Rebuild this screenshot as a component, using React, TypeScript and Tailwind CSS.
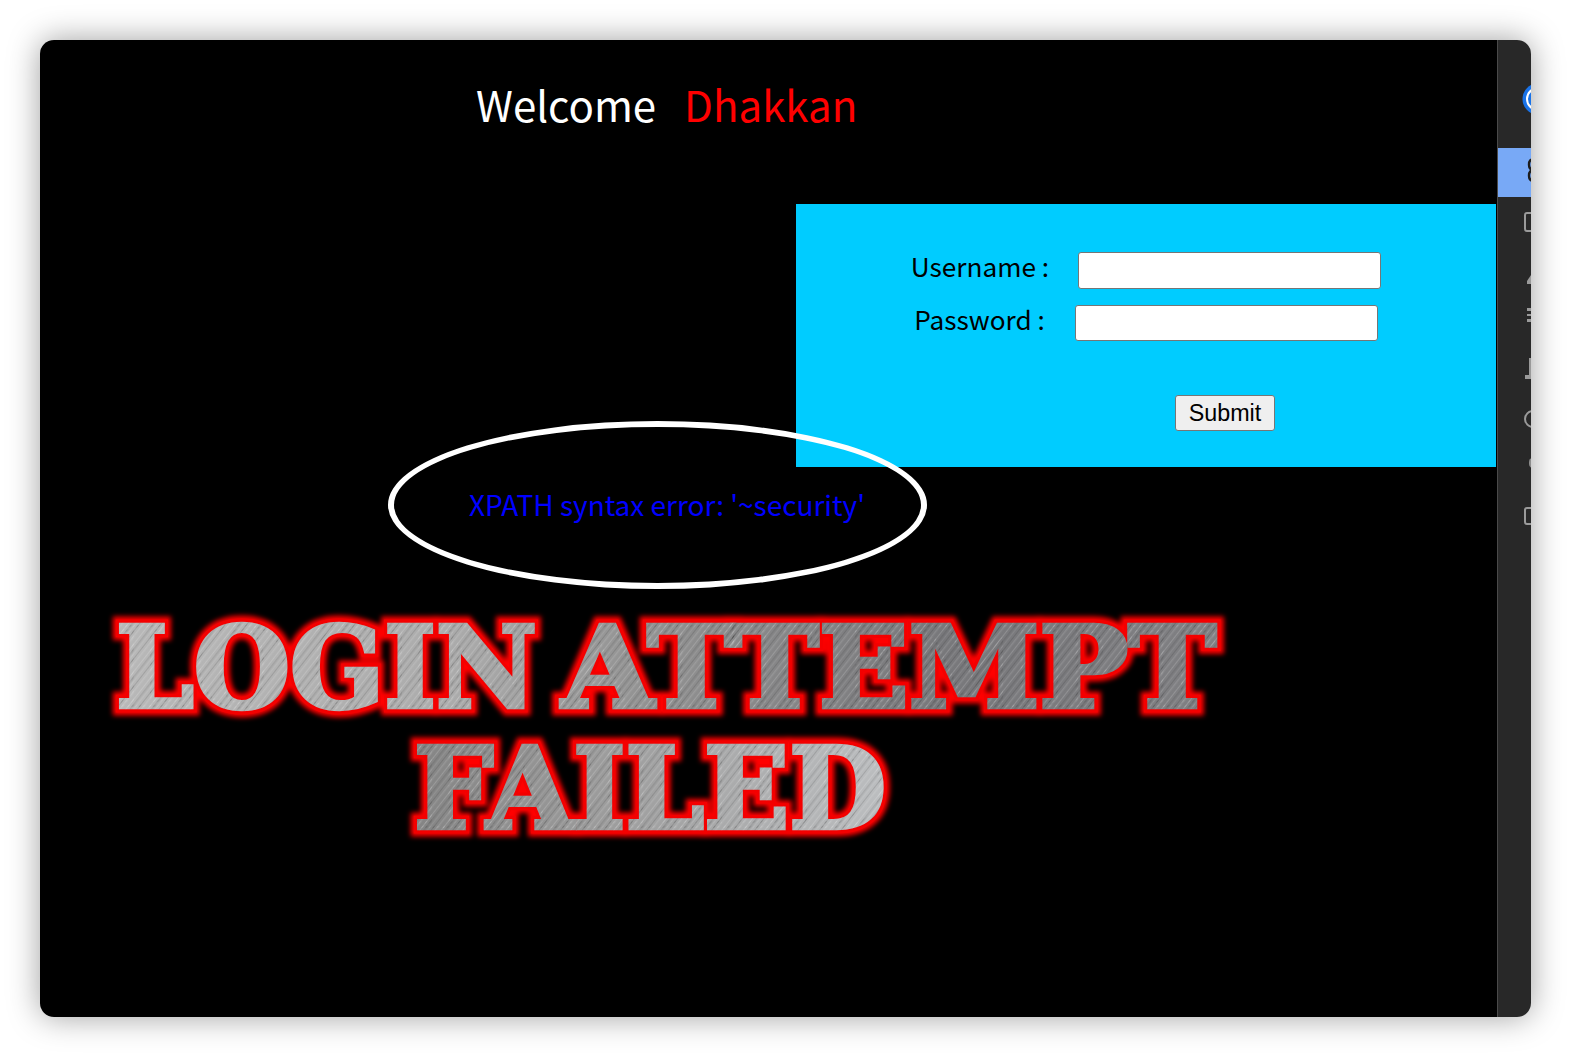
import React from "react";

const cjk = '"Noto Sans CJK SC", "Noto Sans", sans-serif';

function FailedBanner() {
  const words = [
    { text: "LOGIN", x: 16, y: 105, len: 421, grad: "url(#metal1)" },
    { text: "ATTEMPT", x: 462, y: 105, len: 654, grad: "url(#metal1)" },
    { text: "FAILED", x: 314, y: 226, len: 472, grad: "url(#metal2)" },
  ];
  const common = {
    fontFamily: '"DejaVu Serif", serif',
    fontWeight: 700,
    fontSize: 112,
    lengthAdjust: "spacingAndGlyphs" as const,
    strokeLinejoin: "miter" as const,
  };
  return (
    <svg width="1140" height="270" viewBox="0 0 1140 270" className="block">
      <defs>
        <linearGradient id="metal1" x1="15" x2="1117" y1="0" y2="0" gradientUnits="userSpaceOnUse">
          <stop offset="0" stopColor="#b8b8b8" />
          <stop offset="0.3" stopColor="#acacac" />
          <stop offset="0.48" stopColor="#929292" />
          <stop offset="0.75" stopColor="#78787b" />
          <stop offset="1" stopColor="#808083" />
        </linearGradient>
        <linearGradient id="metal2" x1="313" x2="787" y1="0" y2="0" gradientUnits="userSpaceOnUse">
          <stop offset="0" stopColor="#848484" />
          <stop offset="0.4" stopColor="#9c9c9c" />
          <stop offset="1" stopColor="#bcbec0" />
        </linearGradient>
        <pattern id="brush" width="17" height="17" patternUnits="userSpaceOnUse" patternTransform="rotate(-52)">
          <rect y="1" width="17" height="1" fill="#ffffff" opacity="0.16" />
          <rect y="4" width="17" height="1.5" fill="#000000" opacity="0.09" />
          <rect y="7" width="17" height="0.8" fill="#ffffff" opacity="0.1" />
          <rect y="10" width="17" height="1" fill="#000000" opacity="0.12" />
          <rect y="13" width="17" height="1.4" fill="#ffffff" opacity="0.12" />
        </pattern>
        <filter id="glow" x="-5%" y="-20%" width="110%" height="140%">
          <feGaussianBlur stdDeviation="2.6" />
        </filter>
      </defs>
      {words.map((l) => (
        <g key={l.text}>
          <text {...common} x={l.x} y={l.y} textLength={l.len} fill="#ff0000" stroke="#ff0000" strokeWidth="17" filter="url(#glow)">{l.text}</text>
          <text {...common} x={l.x} y={l.y} textLength={l.len} fill="#ff0000" stroke="#f40000" strokeWidth="11">{l.text}</text>
        </g>
      ))}
      {words.map((l) => (
        <g key={l.text + "-face"}>
          <text {...common} x={l.x} y={l.y} textLength={l.len} fill={l.grad} stroke={l.grad} strokeWidth="4.5">{l.text}</text>
          <text {...common} x={l.x} y={l.y} textLength={l.len} fill="url(#brush)" stroke="url(#brush)" strokeWidth="4.5">{l.text}</text>
        </g>
      ))}
    </svg>
  );
}

function Rail() {
  const grey = "#9a9a9a";
  return (
    <aside className="w-[34px] shrink-0 bg-[#282828] overflow-hidden border-l border-[#4a4a4a]">
      <div className="h-[108px] pt-[43px] pl-[24px]">
        <svg width="32" height="32" viewBox="0 0 32 32" className="block">
          <circle cx="16" cy="16" r="15.5" fill="#1a73e8" />
          <circle cx="16" cy="16" r="11" fill="none" stroke="#ffffff" strokeWidth="2" />
          <path d="M9 9q7 5 14 0M9 23q7-5 14 0" fill="none" stroke="#ffffff" strokeWidth="2" />
        </svg>
      </div>
      <div className="h-[49px] bg-[#78a9f6] pl-[28px] pt-[9px]">
        <svg width="12" height="26" viewBox="0 0 12 26" className="block">
          <path d="M8 2q-5 0-5 5.5t5 5.5q-5 0-5 5.5t5 5.5" fill="none" stroke="#1c1c1c" strokeWidth="2.4" />
        </svg>
      </div>
      <div className="h-[48px] pl-[26px] pt-[15px]">
        <div className="w-[16px] h-[20px] rounded-[3px] border-[2.5px] border-[#9a9a9a]" />
      </div>
      <div className="h-[58px] pl-[29px] pt-[30px]">
        <svg width="6" height="9" viewBox="0 0 6 9" className="block">
          <path d="M0 6l4-6h2v9H0z" fill={grey} />
        </svg>
      </div>
      <div className="h-[50px] pl-[29px] pt-[5px] flex flex-col gap-[3px]">
        <div className="w-[10px] h-[2.5px] bg-[#9a9a9a]" />
        <div className="w-[10px] h-[2.5px] bg-[#9a9a9a]" />
        <div className="w-[10px] h-[2.5px] bg-[#9a9a9a]" />
      </div>
      <div className="h-[52px] pl-[27px] pt-[5px]">
        <svg width="10" height="22" viewBox="0 0 10 22" className="block">
          <path d="M4 0h6v17H4zM0 17h10v4H0z" fill={grey} />
        </svg>
      </div>
      <div className="h-[48px] pl-[26px] pt-[5px]">
        <div className="w-[22px] h-[18px] rounded-[9px] border-[2.5px] border-[#9a9a9a]" />
      </div>
      <div className="h-[50px] pl-[31px] pt-[5px]">
        <div className="w-[8px] h-[10px] rounded-full bg-[#8c8c8c]" />
      </div>
      <div className="pl-[26px] pt-[4px]">
        <div className="w-[16px] h-[18px] rounded-[3px] border-[2.5px] border-[#9a9a9a]" />
      </div>
    </aside>
  );
}

export default function App() {
  const input =
    "block w-[303px] bg-white rounded-[3px] border border-[#767676]";
  return (
    <div className="w-full h-screen bg-white p-10">
      <div className="flex h-full rounded-[14px] overflow-hidden shadow-[0_0_32px_rgba(0,0,0,0.38)]">
        <main className="relative flex-1 bg-black" style={{ fontFamily: cjk }}>
          <div className="h-[164px] pl-[436px] pt-[30px] flex items-start">
            <span className="text-[42px] leading-[68px] text-white">Welcome</span>
            <span className="text-[42px] leading-[68px] text-[#ff0000] ml-[28px]">Dhakkan</span>
          </div>

          <form className="ml-[756px] w-[700px] h-[263px] bg-[#00ccff] pt-[48px]">
            <div className="h-[37px] flex justify-center items-center gap-[29px] text-[26.2px] leading-[37px] text-black">
              <label className="mb-[8px]">Username :</label>
              <input className={input + " h-[37px]"} />
            </div>
            <div className="h-[36px] flex justify-center items-center gap-[30px] mt-[16px] text-[26.2px] leading-[36px] text-black">
              <label className="mb-[8px]">Password :</label>
              <input className={input + " h-[36px]"} />
            </div>
            <button
              type="button"
              className="block ml-[379px] mt-[54px] w-[100px] h-[36px] bg-[#efefef] rounded-[3px] border border-[#767676] text-[23.3px] text-black"
              style={{ fontFamily: '"Liberation Sans", Arial, sans-serif' }}
            >
              Submit
            </button>
          </form>

          <div className="pl-[429px] pt-[15px] h-[77px] text-[28px] leading-[44px] text-[#0000ff]">
            XPATH syntax error: '~security'
          </div>

          <div className="absolute left-[348px] top-[381px] w-[539px] h-[168px] rounded-[50%] border-[6px] border-white" />

          <div className="ml-[60px] mt-[58px]">
            <FailedBanner />
          </div>
        </main>
        <Rail />
      </div>
    </div>
  );
}
